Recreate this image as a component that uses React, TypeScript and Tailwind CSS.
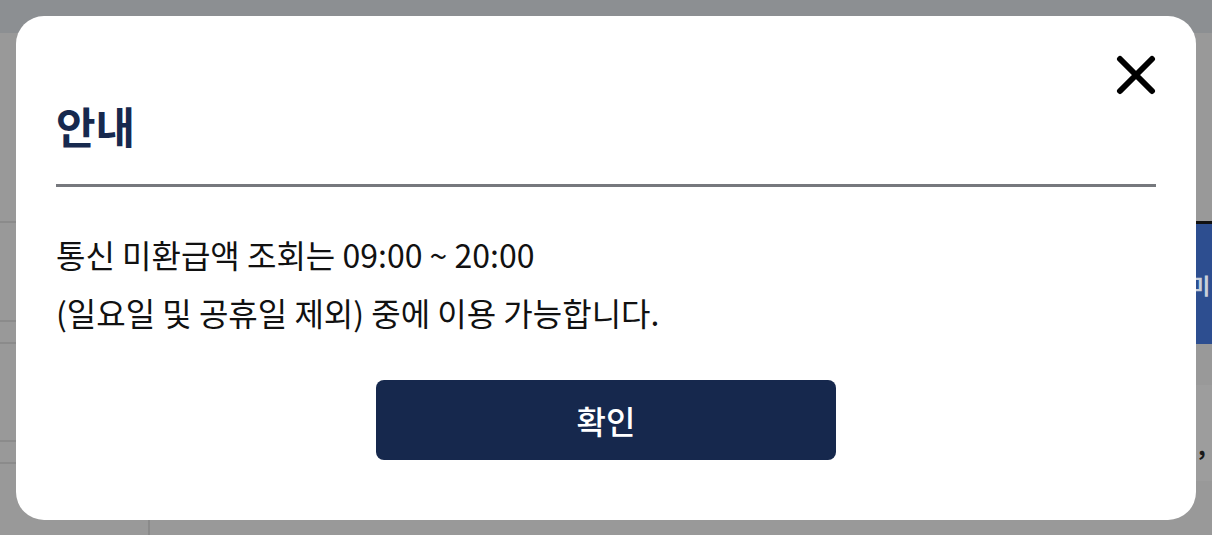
import React from "react";

const font = { fontFamily: '"Noto Sans CJK KR", "Noto Sans", sans-serif' };

function BackgroundPage() {
  return (
    <div className="flex h-[535px] w-[1212px] flex-col overflow-hidden bg-[#999999]" style={font}>
      <div className="h-[33px] shrink-0 bg-[#8c8f92]" />
      <div className="flex flex-1">
        <div className="flex flex-1 flex-col">
          <div className="h-[190px] shrink-0 border-b-2 border-[#8b8b8b]" />
          <div className="h-[99px] shrink-0 border-b-2 border-[#8b8b8b]" />
          <div className="h-[22px] shrink-0 border-b-2 border-[#8b8b8b]" />
          <div className="h-[98px] shrink-0 border-b-2 border-[#8b8b8b]" />
          <div className="h-[22px] shrink-0 border-b-2 border-[#8b8b8b]" />
          <div className="h-[54px] shrink-0" />
          <div className="flex flex-1">
            <div className="w-[150px] shrink-0 border-r-2 border-[#8a8a8a]" />
          </div>
        </div>
        <div className="flex w-[16px] shrink-0 flex-col">
          <div className="h-[188px] shrink-0" />
          <div className="h-[3px] shrink-0 bg-[#111111]" />
          <div className="flex h-[120px] shrink-0 items-center overflow-hidden bg-[#2d4e90]">
            <span className="-ml-[6px] text-[22px] font-bold leading-none text-[#c9cfdb]">미</span>
          </div>
          <div className="h-[41px] shrink-0" />
          <div className="flex h-[96px] shrink-0 items-end bg-[#9d9d9d] pb-[24px]">
            <span className="ml-[2px] text-[24px] font-bold leading-none text-[#1a1a1a]">,</span>
          </div>
          <div className="flex-1" />
        </div>
      </div>
    </div>
  );
}

export default function App() {
  return (
    <div className="relative h-[535px] w-[1212px] overflow-hidden" style={font}>
      <BackgroundPage />
      <div className="absolute left-[16px] top-[16px] flex h-[504px] w-[1180px] flex-col rounded-[28px] bg-white px-[40px] pt-[85px]">
        <button
          type="button"
          aria-label="닫기"
          className="absolute right-[40px] top-[39px] flex h-[40px] w-[40px] items-center justify-center"
        >
          <svg width="40" height="40" viewBox="0 0 40 40" fill="none">
            <path d="M4 4 L36 36 M36 4 L4 36" stroke="#000" strokeWidth="6" strokeLinecap="round" />
          </svg>
        </button>
        <h2 className="text-[43px] font-bold leading-[48px] text-[#17294e]">안내</h2>
        <div className="mt-[35px] h-[3px] w-full bg-[#76787d]" />
        <div className="mt-[38px] text-[32px] leading-[58px] text-[#111111]">
          <p>통신 미환급액 조회는 09:00 ~ 20:00</p>
          <p>(일요일 및 공휴일 제외) 중에 이용 가능합니다.</p>
        </div>
        <div className="mt-[39px] flex justify-center">
          <button
            type="button"
            className="flex h-[80px] w-[460px] items-center justify-center rounded-[8px] bg-[#16284d] text-[32px] font-medium text-white"
          >
            확인
          </button>
        </div>
      </div>
    </div>
  );
}
